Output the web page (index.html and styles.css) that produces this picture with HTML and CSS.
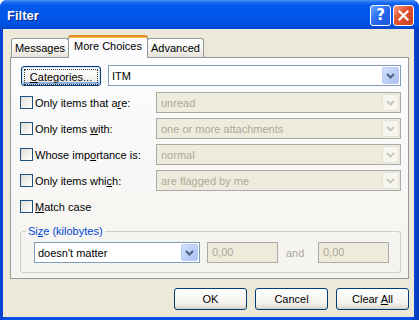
FILE: index.html
```html
<!DOCTYPE html>
<html lang="en">

<head>
    <meta charset="UTF-8">
    <title>Filter</title>
    <link rel="stylesheet" href="styles.css">
</head>

<body>
    <div class="window">
        <div class="titlebar">
            <span class="title">Filter</span>
            <div class="caption-buttons">
                <span class="cap-btn help">?</span>
                <span class="cap-btn close">
                    <svg width="11" height="11" viewBox="0 0 11 11">
                        <path d="M1.5 1.5 L9.5 9.5 M9.5 1.5 L1.5 9.5" stroke="#fff" stroke-width="2.2" stroke-linecap="square" />
                    </svg>
                </span>
            </div>
        </div>

        <div class="client">
            <div class="tabs">
                <span class="tab tab-messages">Messages</span>
                <span class="tab tab-more active">More Choices</span>
                <span class="tab tab-advanced">Advanced</span>
            </div>

            <div class="panel">
                <div class="row first">
                    <button class="btn btn-cat"><span class="focus"><u>C</u>ategories...</span></button>
                    <div class="combo combo-itm">
                        <span class="value">ITM</span>
                        <span class="drop"><svg width="9" height="6" viewBox="0 0 9 6"><path d="M1 1 L4.5 4.5 L8 1" fill="none" stroke="#4D6185" stroke-width="2" /></svg></span>
                    </div>
                </div>

                <div class="row">
                    <label class="check"><span class="box"></span><span>Only items that a<u>r</u>e:</span></label>
                    <div class="combo disabled">
                        <span class="value">unread</span>
                        <span class="drop"><svg width="9" height="6" viewBox="0 0 9 6"><path d="M1 1 L4.5 4.5 L8 1" fill="none" stroke="#C9C7BA" stroke-width="2" /></svg></span>
                    </div>
                </div>

                <div class="row">
                    <label class="check"><span class="box"></span><span>Only items <u>w</u>ith:</span></label>
                    <div class="combo disabled">
                        <span class="value">one or more attachments</span>
                        <span class="drop"><svg width="9" height="6" viewBox="0 0 9 6"><path d="M1 1 L4.5 4.5 L8 1" fill="none" stroke="#C9C7BA" stroke-width="2" /></svg></span>
                    </div>
                </div>

                <div class="row">
                    <label class="check"><span class="box"></span><span>Whose imp<u>o</u>rtance is:</span></label>
                    <div class="combo disabled">
                        <span class="value">normal</span>
                        <span class="drop"><svg width="9" height="6" viewBox="0 0 9 6"><path d="M1 1 L4.5 4.5 L8 1" fill="none" stroke="#C9C7BA" stroke-width="2" /></svg></span>
                    </div>
                </div>

                <div class="row">
                    <label class="check"><span class="box"></span><span>Only items whi<u>c</u>h:</span></label>
                    <div class="combo disabled">
                        <span class="value">are flagged by me</span>
                        <span class="drop"><svg width="9" height="6" viewBox="0 0 9 6"><path d="M1 1 L4.5 4.5 L8 1" fill="none" stroke="#C9C7BA" stroke-width="2" /></svg></span>
                    </div>
                </div>

                <div class="row">
                    <label class="check"><span class="box"></span><span><u>M</u>atch case</span></label>
                </div>

                <fieldset class="group">
                    <legend>Si<u>z</u>e (kilobytes)</legend>
                    <div class="group-row">
                        <div class="combo combo-size">
                            <span class="value">doesn't matter</span>
                            <span class="drop"><svg width="9" height="6" viewBox="0 0 9 6"><path d="M1 1 L4.5 4.5 L8 1" fill="none" stroke="#4D6185" stroke-width="2" /></svg></span>
                        </div>
                        <div class="textbox">0,00</div>
                        <span class="and">and</span>
                        <div class="textbox">0,00</div>
                    </div>
                </fieldset>
            </div>

            <div class="actions">
                <button class="btn">OK</button>
                <button class="btn">Cancel</button>
                <button class="btn">Clear <u>A</u>ll</button>
            </div>
        </div>
    </div>
</body>

</html>
```

FILE: styles.css
```css
body {
    margin: 0;
    font-family: "Liberation Sans", Arial, sans-serif;
    font-size: 11px;
    color: #000;
}

.window {
    width: 419px;
    height: 320px;
    display: flex;
    flex-direction: column;
    background: linear-gradient(90deg, #0840D0, #0A50E6 2%, #0A50E6 98%, #0636B8);
    border-radius: 7px 7px 0 0;
    overflow: hidden;
}

/* title bar */
.titlebar {
    height: 29px;
    flex: none;
    display: flex;
    align-items: center;
    justify-content: space-between;
    padding: 0 5px 0 7px;
    background: linear-gradient(#4A94F8 0%, #1F6DF2 8%, #0459EC 18%, #0256EA 55%, #0052E3 80%, #0047D2 100%);
}

.title {
    font-weight: bold;
    font-size: 13px;
    color: #fff;
    text-shadow: 1px 1px #0A1E80;
    padding-top: 1px;
}

.caption-buttons {
    display: flex;
    gap: 2px;
    padding-top: 1px;
}

.cap-btn {
    width: 19px;
    height: 19px;
    border: 1px solid #fff;
    border-radius: 3px;
    display: flex;
    align-items: center;
    justify-content: center;
    color: #fff;
}

.help {
    background: linear-gradient(135deg, #6BA5FF, #2A6DF0 45%, #1752D8);
    font-weight: bold;
    font-size: 15px;
    font-family: "DejaVu Sans", sans-serif;
}

.close {
    background: linear-gradient(135deg, #F6A288, #E2552E 40%, #C8401E);
}

/* client area */
.client {
    flex: 1;
    margin: 0 5px 3px 3px;
    background: #ECE9D8;
    display: flex;
    flex-direction: column;
}

.tabs {
    display: flex;
    align-items: flex-end;
    height: 22px;
    margin: 6px 0 0 8px;
}

.tab {
    box-sizing: border-box;
    height: 19px;
    line-height: 18px;
    text-align: center;
    border: 1px solid #919B9C;
    border-bottom: 0;
    border-radius: 3px 3px 0 0;
    background: linear-gradient(#FFFFFF, #F3F2EE 60%, #E4E2D8);
    margin-right: -1px;
}

.tab-messages {
    width: 58px;
}

.tab-more {
    width: 80px;
}

.tab-advanced {
    width: 57px;
}

.tab.active {
    position: relative;
    height: 23px;
    line-height: 19px;
    margin-bottom: -1px;
    background: #FCFCFE;
    border-top: 2px solid #E68B2C;
    box-shadow: inset 0 1px #FFC73C;
}

.panel {
    box-sizing: border-box;
    height: 222px;
    margin: 0 5px 0 7px;
    padding: 7px 7px 0 10px;
    border: 1px solid #919B9C;
    background: linear-gradient(#FCFCFE, #F4F3EE);
}

.row {
    display: flex;
    align-items: center;
    height: 21px;
    margin-bottom: 5px;
}

.row.first {
    margin-bottom: 6px;
}

/* buttons */
.btn {
    box-sizing: border-box;
    width: 73px;
    height: 22px;
    padding: 0;
    font: inherit;
    color: #000;
    border: 1px solid #003C74;
    border-radius: 3px;
    background: linear-gradient(#FFFFFF, #F4F3EE 70%, #E3E0D5 90%, #D6D0C5);
}

.btn-cat {
    width: 80px;
    height: 20px;
    padding: 2px;
    box-shadow: inset 0 0 0 1px #CEE7FF, inset 0 -2px 0 1px #89ADE4;
}

.btn-cat .focus {
    display: block;
    height: 14px;
    line-height: 14px;
    border: 1px dotted #333;
}

/* combos */
.combo {
    box-sizing: border-box;
    flex: 1;
    height: 21px;
    display: flex;
    align-items: center;
    justify-content: space-between;
    border: 1px solid #7F9DB9;
    background: #fff;
    padding-left: 3px;
}

.combo-itm {
    margin-left: 7px;
}

.drop {
    box-sizing: border-box;
    width: 17px;
    height: 17px;
    margin-right: 1px;
    display: flex;
    align-items: center;
    justify-content: center;
    border: 1px solid #B9CCF5;
    border-radius: 2px;
    background: linear-gradient(135deg, #D4E1FC, #BACDF8 60%, #A9C0F3);
}

.combo.disabled {
    background: #EEEBDC;
    border-color: #A9ABA6;
    color: #ACA899;
    padding-left: 4px;
}

.combo.disabled .drop {
    border-color: #E5E3D8;
    background: #F6F5EF;
}

/* checkboxes */
.check {
    display: flex;
    align-items: center;
    width: 136px;
    margin-left: -1px;
    flex: none;
}

.box {
    box-sizing: border-box;
    width: 13px;
    height: 13px;
    margin-right: 2px;
    border: 1px solid #1C5180;
    background: linear-gradient(135deg, #DCDCD7, #F0F0EA 50%, #FFFFFF);
}

/* size group */
.group {
    margin: 8px 0 0 -1px;
    padding: 4px 0 9px 13px;
    border: 1px solid #D0D0BF;
    border-radius: 3px;
}

.group legend {
    color: #0046D5;
    padding: 0 2px;
    margin-left: -8px;
    line-height: 13px;
}

.group-row {
    display: flex;
    align-items: center;
    height: 21px;
}

.combo-size {
    flex: none;
    width: 166px;
    margin-right: 7px;
}

.textbox {
    box-sizing: border-box;
    width: 71px;
    height: 21px;
    line-height: 19px;
    padding-left: 4px;
    border: 1px solid #A9ABA6;
    background: #EEEBDC;
    color: #ACA899;
}

.and {
    width: 32px;
    padding-left: 8px;
    color: #ACA899;
}

.actions {
    display: flex;
    justify-content: flex-end;
    gap: 8px;
    margin: 9px 5px 0 0;
}
```
